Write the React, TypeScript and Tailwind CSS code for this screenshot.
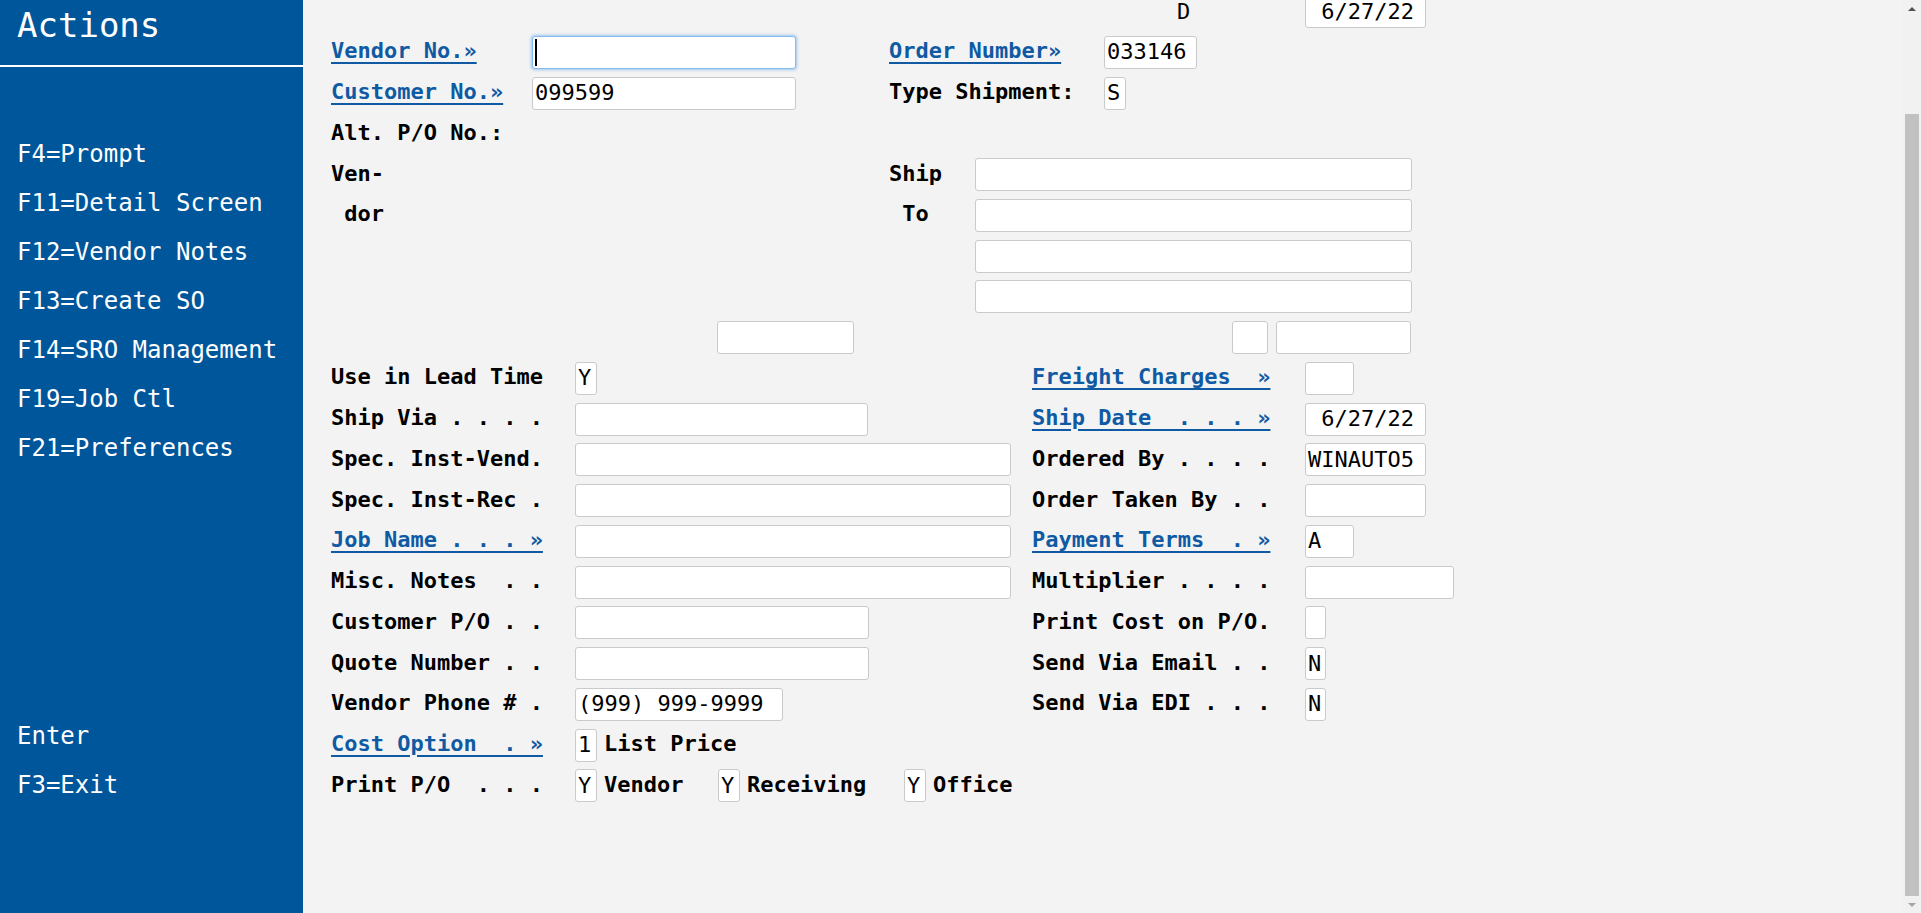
import React from 'react';

// Shared type: Consolas-like mono, widths matched to ~13.3px per char
const mono = "font-['DejaVu_Sans_Mono','Liberation_Mono',monospace]";

const Label = ({ text, link, className = '' }: { text: string; link?: boolean; className?: string }) => (
  <span
    className={`-mt-[2px] block whitespace-pre text-[22px] font-bold leading-none ${
      link ? 'text-[#0f5aa3] underline decoration-2 underline-offset-[4px]' : 'text-black'
    } ${className}`}
  >
    {text}
  </span>
);

const Box = ({ className = '', value = '', focused = false }: { className?: string; value?: string; focused?: boolean }) => (
  <div
    className={`flex h-[33px] shrink-0 items-center rounded-[3px] border bg-white pl-[2px] text-[22px] leading-none text-black whitespace-pre ${
      focused ? 'border-[#86bdf0] shadow-[0_0_3px_1px_rgba(90,160,235,0.55)]' : 'border-[#cacaca]'
    } ${className}`}
  >
    {focused && <div className="h-[27px] w-[2px] bg-black" />}
    {value}
  </div>
);

const Row = ({ children }: { children?: React.ReactNode }) => (
  <div className="flex h-[33px] items-center">{children}</div>
);

const sideItems = ['F4=Prompt', 'F11=Detail Screen', 'F12=Vendor Notes', 'F13=Create SO', 'F14=SRO Management', 'F19=Job Ctl', 'F21=Preferences'];

const Sidebar = () => (
  <aside className="flex h-full w-[303px] shrink-0 flex-col bg-[#00569b] text-white">
    <div className="h-[65px] pl-[17px] pt-[4px] text-[34px] leading-[42px]">Actions</div>
    <div className="h-[2px] bg-white" />
    <div className="mt-[63px] flex flex-col pl-[17px] text-[24px] leading-[49px]">
      {sideItems.map((s) => (
        <div key={s}>{s}</div>
      ))}
    </div>
    <div className="mt-[239px] flex flex-col pl-[17px] text-[24px] leading-[49px]">
      <div>Enter</div>
      <div>F3=Exit</div>
    </div>
  </aside>
);

const Scrollbar = () => (
  <div className="flex h-full w-[18px] shrink-0 flex-col items-center bg-[#f1f1f1]">
    <div className="flex h-[17px] w-full items-center justify-center">
      <div className="h-0 w-0 border-x-[4px] border-b-[4px] border-x-transparent border-b-[#505050]" />
    </div>
    <div className="mt-[97px] w-[14px] flex-1 bg-[#c1c1c1]" />
    <div className="flex h-[17px] w-full items-center justify-center">
      <div className="h-0 w-0 border-x-[4px] border-t-[4px] border-x-transparent border-t-[#a3a3a3]" />
    </div>
  </div>
);

// Lower two-column rows: left label 244 + field, right label 273 + field
const Lower = ({
  l,
  lLink,
  lField,
  r,
  rLink,
  rField,
}: {
  l: string;
  lLink?: boolean;
  lField: React.ReactNode;
  r?: string;
  rLink?: boolean;
  rField?: React.ReactNode;
}) => (
  <Row>
    <div className="flex w-[701px] shrink-0 items-center">
      <div className="w-[244px] shrink-0">
        <Label text={l} link={lLink} />
      </div>
      {lField}
    </div>
    {r && (
      <div className="flex items-center">
        <div className="w-[273px] shrink-0">
          <Label text={r} link={rLink} />
        </div>
        {rField}
      </div>
    )}
  </Row>
);

export default function App() {
  return (
    <div className={`flex h-[913px] w-full overflow-hidden bg-[#f3f3f3] ${mono}`}>
      <Sidebar />
      <main className="min-w-0 flex-1 overflow-hidden">
        <div className="-mt-[5px] flex flex-col gap-[7.75px] pl-[28px]">
          {/* date header */}
          <Row>
            <div className="w-[558px] shrink-0" />
            <div className="w-[416px] shrink-0 pl-[288px] text-[22px] leading-none">D</div>
            <Box className="w-[121px]" value=" 6/27/22" />
          </Row>
          <Row>
            <div className="flex w-[558px] shrink-0 items-center">
              <div className="w-[201px] shrink-0">
                <Label text="Vendor No.»" link />
              </div>
              <Box className="w-[264px]" focused />
            </div>
            <div className="w-[215px] shrink-0">
              <Label text="Order Number»" link />
            </div>
            <Box className="w-[93px]" value="033146" />
          </Row>
          <Row>
            <div className="flex w-[558px] shrink-0 items-center">
              <div className="w-[201px] shrink-0">
                <Label text="Customer No.»" link />
              </div>
              <Box className="w-[264px]" value="099599" />
            </div>
            <div className="w-[215px] shrink-0">
              <Label text="Type Shipment:" />
            </div>
            <Box className="w-[22px]" value="S" />
          </Row>
          <Row>
            <Label text="Alt. P/O No.:" />
          </Row>
          <Row>
            <div className="w-[558px] shrink-0">
              <Label text="Ven-" />
            </div>
            <div className="w-[86px] shrink-0">
              <Label text="Ship" />
            </div>
            <Box className="w-[437px]" />
          </Row>
          <Row>
            <div className="w-[558px] shrink-0">
              <Label text=" dor" />
            </div>
            <div className="w-[86px] shrink-0">
              <Label text=" To" />
            </div>
            <Box className="w-[437px]" />
          </Row>
          <Row>
            <div className="w-[644px] shrink-0" />
            <Box className="w-[437px]" />
          </Row>
          <Row>
            <div className="w-[644px] shrink-0" />
            <Box className="w-[437px]" />
          </Row>
          <Row>
            <div className="w-[386px] shrink-0" />
            <Box className="w-[137px]" />
            <div className="w-[378px] shrink-0" />
            <Box className="w-[36px]" />
            <Box className="ml-[8px] w-[135px]" />
          </Row>

          <Lower l="Use in Lead Time" lField={<Box className="w-[22px]" value="Y" />} r="Freight Charges  »" rLink rField={<Box className="w-[49px]" />} />
          <Lower l="Ship Via . . . ." lField={<Box className="w-[293px]" />} r="Ship Date  . . . »" rLink rField={<Box className="w-[121px]" value=" 6/27/22" />} />
          <Lower l="Spec. Inst-Vend." lField={<Box className="w-[436px]" />} r="Ordered By . . . ." rField={<Box className="w-[121px]" value="WINAUTO5" />} />
          <Lower l="Spec. Inst-Rec ." lField={<Box className="w-[436px]" />} r="Order Taken By . ." rField={<Box className="w-[121px]" />} />
          <Lower l="Job Name . . . »" lLink lField={<Box className="w-[436px]" />} r="Payment Terms  . »" rLink rField={<Box className="w-[49px]" value="A" />} />
          <Lower l="Misc. Notes  . ." lField={<Box className="w-[436px]" />} r="Multiplier . . . ." rField={<Box className="w-[149px]" />} />
          <Lower l="Customer P/O . ." lField={<Box className="w-[294px]" />} r="Print Cost on P/O." rField={<Box className="w-[21px]" />} />
          <Lower l="Quote Number . ." lField={<Box className="w-[294px]" />} r="Send Via Email . ." rField={<Box className="w-[21px]" value="N" />} />
          <Lower l="Vendor Phone # ." lField={<Box className="w-[208px]" value="(999) 999-9999" />} r="Send Via EDI . . ." rField={<Box className="w-[21px]" value="N" />} />
          <Lower
            l="Cost Option  . »"
            lLink
            lField={
              <div className="flex items-center">
                <Box className="w-[22px]" value="1" />
                <Label text="List Price" className="ml-[7px]" />
              </div>
            }
          />
          <Lower
            l="Print P/O  . . ."
            lField={
              <div className="flex items-center">
                <Box className="w-[22px]" value="Y" />
                <Label text="Vendor" className="ml-[7px] w-[114px]" />
                <Box className="w-[22px]" value="Y" />
                <Label text="Receiving" className="ml-[7px] w-[157px]" />
                <Box className="w-[22px]" value="Y" />
                <Label text="Office" className="ml-[7px]" />
              </div>
            }
          />
        </div>
      </main>
      <Scrollbar />
    </div>
  );
}
